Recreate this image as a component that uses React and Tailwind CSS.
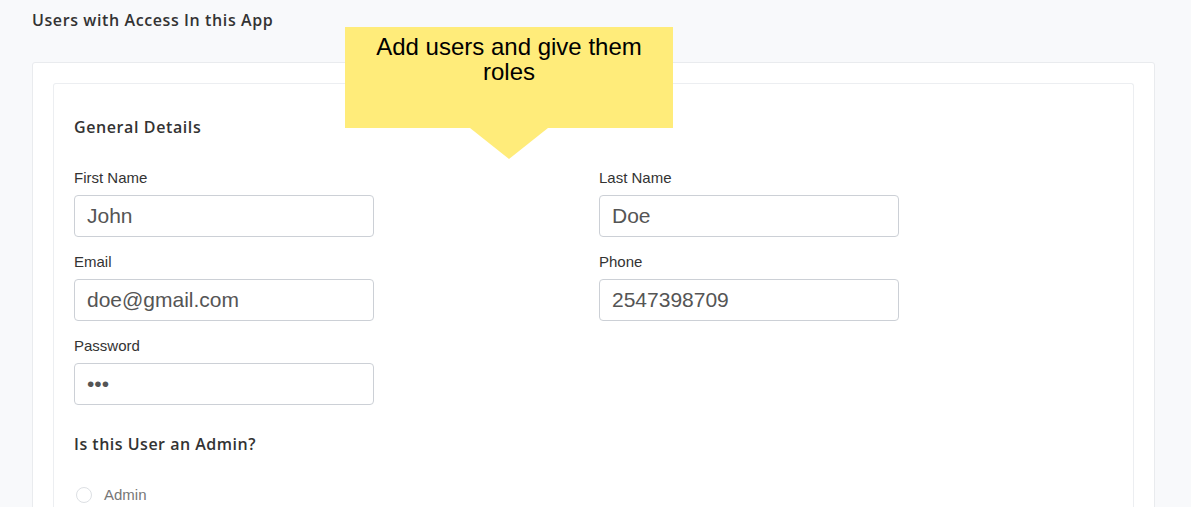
import React from 'react'

const heading = { fontFamily: '"Open Sans", "DejaVu Sans", sans-serif' }
const arial = { fontFamily: '"Liberation Sans", Arial, sans-serif' }

function Field({ label, value, type = 'text' }) {
  return (
    <div className="flex flex-col">
      <label className="text-[15px] leading-[18px] text-[#333]" style={arial}>{label}</label>
      <input
        type={type}
        defaultValue={value}
        className="mt-[8px] w-[300px] h-[42px] rounded-[4px] border border-[#ccd0d6] bg-white px-[12px] text-[21px] text-[#555] outline-none"
        style={arial}
      />
    </div>
  )
}

export default function App() {
  return (
    <div className="min-h-[507px] bg-[#f8f9fb] px-[32px] pt-[8px] relative overflow-hidden">
      <h1 className="text-[16px] leading-[24px] font-semibold tracking-[0.6px] text-[#333]" style={heading}>
        Users with Access In this App
      </h1>

      <div className="mt-[30px] w-[1123px] bg-white border border-[#e9ebee] rounded-[3px] p-[20px] pb-0">
        <div className="border border-[#eceef1] border-b-0 rounded-t-[3px] px-[20px] pt-[31px] pb-[10px]">
          <h2 className="text-[16px] leading-[24px] font-semibold tracking-[0.6px] text-[#333]" style={heading}>General Details</h2>

          <div className="mt-[30px] grid grid-cols-[525px_1fr] gap-y-[16px]">
            <Field label="First Name" value="John" />
            <Field label="Last Name" value="Doe" />
            <Field label="Email" value="doe@gmail.com" />
            <Field label="Phone" value="2547398709" />
            <Field label="Password" value="abc" type="password" />
          </div>

          <h2 className="mt-[27px] text-[16px] leading-[24px] font-semibold tracking-[0.5px] text-[#333]" style={heading}>Is this User an Admin?</h2>

          <div className="mt-[28px] flex items-center gap-[12px] pl-[2px]">
            <span className="w-[16px] h-[16px] rounded-full border border-[#dde0e4] bg-white"></span>
            <span className="text-[15px] text-[#777]" style={arial}>Admin</span>
          </div>
        </div>
      </div>

      <div className="absolute left-[345px] top-[27px] w-[328px]">
        <div className="h-[101px] bg-[#ffec7a] pt-[7px] text-center text-[24px] leading-[25px] text-black" style={arial}>
          Add users and give them<br />roles
        </div>
        <svg className="block ml-[125px]" width="78" height="31" viewBox="0 0 78 31">
          <polygon points="0,0 78,0 39,31" fill="#ffec7a" />
        </svg>
      </div>
    </div>
  )
}
